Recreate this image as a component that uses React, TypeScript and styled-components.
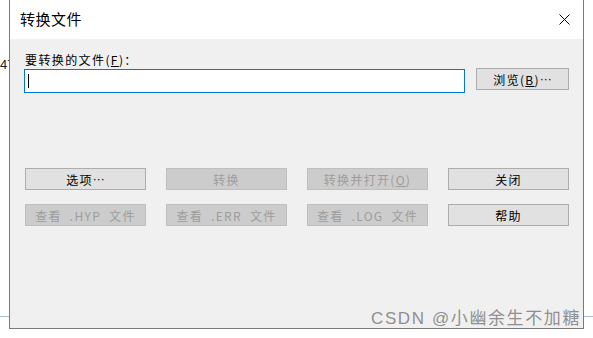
import React from "react";
import styled, { createGlobalStyle } from "styled-components";

const Global = createGlobalStyle`
  html, body { margin: 0; padding: 0; background: #ffffff; }
  body { font-family: "Noto Sans CJK SC", "Noto Sans", sans-serif; }
`;

const Page = styled.div`
  position: relative;
  width: 593px;
  height: 338px;
  overflow: hidden;
  background:
    linear-gradient(#a9bcd6, #a9bcd6) 0 316px / 100% 1px no-repeat,
    #ffffff;
  display: flex;
  align-items: flex-start;
  padding-left: 9px;
  box-sizing: border-box;
`;

const BehindText = styled.span`
  position: absolute;
  left: 0px;
  top: 57px;
  font-family: "Liberation Sans", sans-serif;
  font-size: 13px;
  color: #222;
`;

const Dialog = styled.div`
  position: relative;
  width: 575px;
  height: 329px;
  box-sizing: border-box;
  border: 1px solid #7a7a7a;
  border-top: none;
  background: #f0f0f0;
  display: flex;
  flex-direction: column;
`;

const TitleBar = styled.div`
  height: 39px;
  background: #ffffff;
  display: flex;
  align-items: center;
  justify-content: space-between;
  padding: 0 13px 0 10px;
  box-sizing: border-box;
`;

const Title = styled.span`
  font-size: 15px;
  letter-spacing: 0.5px;
  color: #000;
  margin-top: -2px;
`;

const CloseIcon = styled.svg`
  width: 11px;
  height: 11px;
  margin-top: -1px;
`;

const Body = styled.div`
  flex: 1;
  padding: 11px 14px 0 14px;
  display: flex;
  flex-direction: column;
`;

const Label = styled.div`
  font-size: 12px;
  letter-spacing: 1.4px;
  color: #000;
  padding-left: 1px;
  height: 19px;
  line-height: 19px;
`;

const U = styled.span`
  text-decoration: underline;
`;

const Dots = styled.span`
  font-family: "Liberation Sans", sans-serif;
  letter-spacing: 0;
`;

const InputRow = styled.div`
  display: flex;
  align-items: flex-start;
  gap: 11px;
`;

const FileInput = styled.div`
  width: 442px;
  height: 24px;
  box-sizing: border-box;
  border: 1px solid #0078d7;
  background: #ffffff;
  display: flex;
  align-items: center;
  padding-left: 3px;
`;

const Caret = styled.div`
  width: 1px;
  height: 14px;
  background: #000;
`;

const Button = styled.div<{ $disabled?: boolean; $w?: number; $lift?: number }>`
  width: ${(p) => p.$w ?? 121}px;
  height: 22px;
  margin-top: ${(p) => -(p.$lift ?? 0)}px;
  box-sizing: border-box;
  border: 1px solid ${(p) => (p.$disabled ? "#bfbfbf" : "#adadad")};
  background: ${(p) => (p.$disabled ? "#cccccc" : "#e1e1e1")};
  color: ${(p) => (p.$disabled ? "#9d9d9d" : "#000")};
  font-size: 12px;
  letter-spacing: 1.3px;
  display: flex;
  align-items: center;
  justify-content: center;
  white-space: pre;
`;

const ButtonGrid = styled.div`
  margin-top: 75px;
  display: grid;
  grid-template-columns: repeat(4, 121px);
  column-gap: 20px;
  row-gap: 14px;
  padding-left: 1px;
`;

const Watermark = styled.span`
  position: absolute;
  right: 2px;
  bottom: -1px;
  font-family: "Liberation Sans", "Noto Sans CJK SC", sans-serif;
  font-size: 17px;
  color: #8f8f8f;
  letter-spacing: 1.6px;
`;

export default function App() {
  return (
    <>
      <Global />
      <Page>
        <BehindText>47</BehindText>
        <Dialog>
          <TitleBar>
            <Title>转换文件</Title>
            <CloseIcon viewBox="0 0 11 11">
              <path d="M0.5 0.5 L10.5 10.5 M10.5 0.5 L0.5 10.5" stroke="#000" strokeWidth="1" fill="none" />
            </CloseIcon>
          </TitleBar>
          <Body>
            <Label>
              要转换的文件(<U>F</U>)：
            </Label>
            <InputRow>
              <FileInput>
                <Caret />
              </FileInput>
              <Button $w={93} $lift={1}>
                浏览(<U>B</U>)<Dots>···</Dots>
              </Button>
            </InputRow>
            <ButtonGrid>
              <Button>
                选项<Dots>···</Dots>
              </Button>
              <Button $disabled>转换</Button>
              <Button $disabled>
                转换并打开(<U>O</U>)
              </Button>
              <Button>关闭</Button>
              <Button $disabled>{"查看  .HYP  文件"}</Button>
              <Button $disabled>{"查看  .ERR  文件"}</Button>
              <Button $disabled>{"查看  .LOG  文件"}</Button>
              <Button>帮助</Button>
            </ButtonGrid>
          </Body>
          <Watermark>CSDN @小幽余生不加糖</Watermark>
        </Dialog>
      </Page>
    </>
  );
}
